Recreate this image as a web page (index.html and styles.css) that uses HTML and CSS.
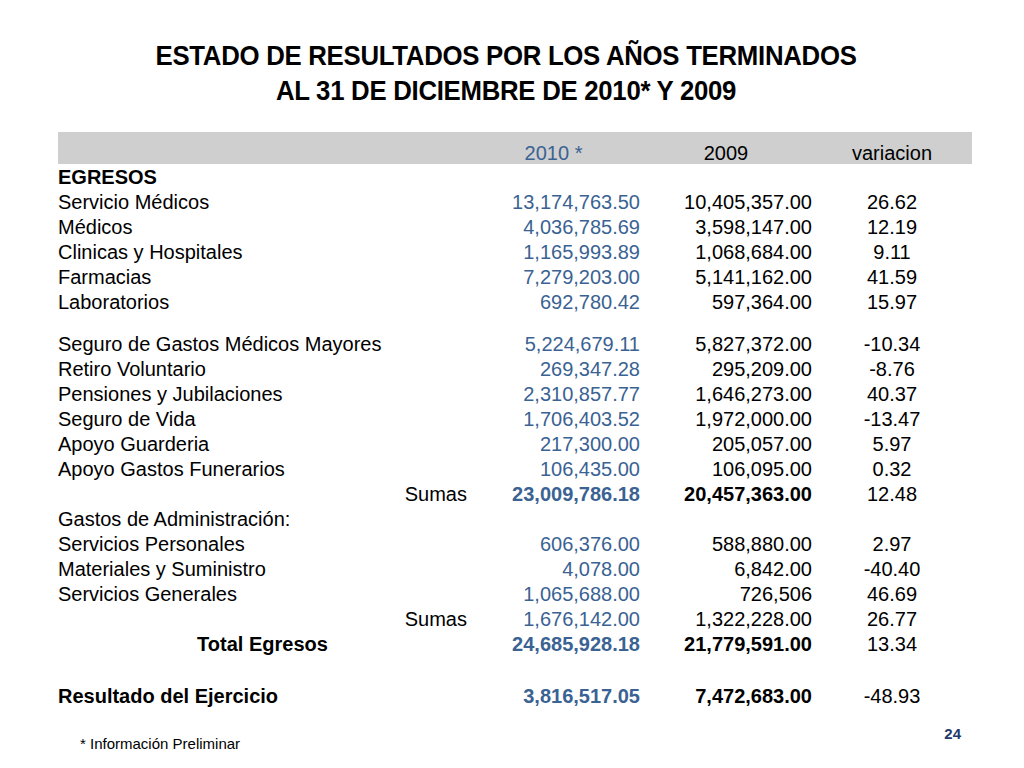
FILE: index.html
```html
<!DOCTYPE html>
<html lang="es">
<head>
<meta charset="utf-8">
<title>Estado de Resultados</title>
<link rel="stylesheet" href="styles.css">
</head>
<body>
<div class="slide">
  <h1 class="title"><span class="title-text">ESTADO DE RESULTADOS POR LOS AÑOS TERMINADOS<br>AL 31 DE DICIEMBRE DE 2010* Y 2009</span></h1>
  <div class="table">
    <div class="row head"><span></span><span class="c blue">2010 *</span><span class="c">2009</span><span class="c">variacion</span></div>
    <div class="row first"><span class="b">EGRESOS</span><span></span><span></span><span></span></div>
    <div class="row"><span>Servicio Médicos</span><span class="r blue">13,174,763.50</span><span class="r">10,405,357.00</span><span class="c">26.62</span></div>
    <div class="row"><span>Médicos</span><span class="r blue">4,036,785.69</span><span class="r">3,598,147.00</span><span class="c">12.19</span></div>
    <div class="row"><span>Clinicas y Hospitales</span><span class="r blue">1,165,993.89</span><span class="r">1,068,684.00</span><span class="c">9.11</span></div>
    <div class="row"><span>Farmacias</span><span class="r blue">7,279,203.00</span><span class="r">5,141,162.00</span><span class="c">41.59</span></div>
    <div class="row"><span>Laboratorios</span><span class="r blue">692,780.42</span><span class="r">597,364.00</span><span class="c">15.97</span></div>
    <div class="row gap"><span>Seguro de Gastos Médicos Mayores</span><span class="r blue">5,224,679.11</span><span class="r">5,827,372.00</span><span class="c">-10.34</span></div>
    <div class="row"><span>Retiro Voluntario</span><span class="r blue">269,347.28</span><span class="r">295,209.00</span><span class="c">-8.76</span></div>
    <div class="row"><span>Pensiones y Jubilaciones</span><span class="r blue">2,310,857.77</span><span class="r">1,646,273.00</span><span class="c">40.37</span></div>
    <div class="row"><span>Seguro de Vida</span><span class="r blue">1,706,403.52</span><span class="r">1,972,000.00</span><span class="c">-13.47</span></div>
    <div class="row"><span>Apoyo Guarderia</span><span class="r blue">217,300.00</span><span class="r">205,057.00</span><span class="c">5.97</span></div>
    <div class="row"><span>Apoyo Gastos Funerarios</span><span class="r blue">106,435.00</span><span class="r">106,095.00</span><span class="c">0.32</span></div>
    <div class="row"><span class="r">Sumas</span><span class="r blue b">23,009,786.18</span><span class="r b">20,457,363.00</span><span class="c">12.48</span></div>
    <div class="row"><span>Gastos de Administración:</span><span></span><span></span><span></span></div>
    <div class="row"><span>Servicios Personales</span><span class="r blue">606,376.00</span><span class="r">588,880.00</span><span class="c">2.97</span></div>
    <div class="row"><span>Materiales y Suministro</span><span class="r blue">4,078.00</span><span class="r">6,842.00</span><span class="c">-40.40</span></div>
    <div class="row"><span>Servicios Generales</span><span class="r blue">1,065,688.00</span><span class="r">726,506</span><span class="c">46.69</span></div>
    <div class="row"><span class="r">Sumas</span><span class="r blue">1,676,142.00</span><span class="r">1,322,228.00</span><span class="c">26.77</span></div>
    <div class="row"><span class="c b">Total Egresos</span><span class="r blue b">24,685,928.18</span><span class="r b">21,779,591.00</span><span class="c">13.34</span></div>
    <div class="row spacer"><span></span><span></span><span></span><span></span></div>
    <div class="row"><span class="b">Resultado del Ejercicio</span><span class="r blue b">3,816,517.05</span><span class="r b">7,472,683.00</span><span class="c">-48.93</span></div>
  </div>
  <div class="footer">
    <span class="note">* Información Preliminar</span>
    <span class="page">24</span>
  </div>
</div>
</body>
</html>
```

FILE: styles.css
```css
html, body {
  margin: 0;
  padding: 0;
  background: #ffffff;
}

.slide {
  width: 1024px;
  height: 768px;
  box-sizing: border-box;
  padding: 38px 52px 0 58px;
  font-family: "Liberation Sans", Arial, sans-serif;
  color: #000000;
  display: flex;
  flex-direction: column;
}

.title {
  margin: 0 0 24px 0;
  padding-right: 18px;
  text-align: center;
  font-family: "Liberation Sans", Arial, sans-serif;
  font-weight: bold;
  font-size: 28px;
  line-height: 35px;
  letter-spacing: -0.3px;
}

.title-text {
  display: inline-block;
  transform: scaleX(0.92);
  transform-origin: center;
}

.table {
  width: 914px;
  font-size: 20px;
}

.row {
  display: grid;
  grid-template-columns: 409px 173px 172px 160px;
  height: 25px;
  line-height: 25px;
  white-space: nowrap;
}

.row.head {
  background: #cfcfcf;
  box-sizing: content-box;
  padding-top: 4px;
  height: 28px;
  line-height: 35px;
  margin-bottom: 1px;
}

.row.first {
  margin-top: 1px;
}

.row.gap {
  margin-top: 17px;
}

.row.spacer {
  height: 27px;
}

.r { text-align: right; }
.c { text-align: center; }
.b { font-weight: bold; }
.blue { color: #3a6293; }

.footer {
  margin-top: auto;
  height: 50px;
  display: flex;
  justify-content: space-between;
  align-items: flex-start;
}

.note {
  font-size: 15px;
  margin-left: 22px;
  margin-top: 17px;
}

.page {
  font-size: 15px;
  font-weight: bold;
  color: #1f3a6b;
  margin-right: 11px;
  margin-top: 7px;
}
```
